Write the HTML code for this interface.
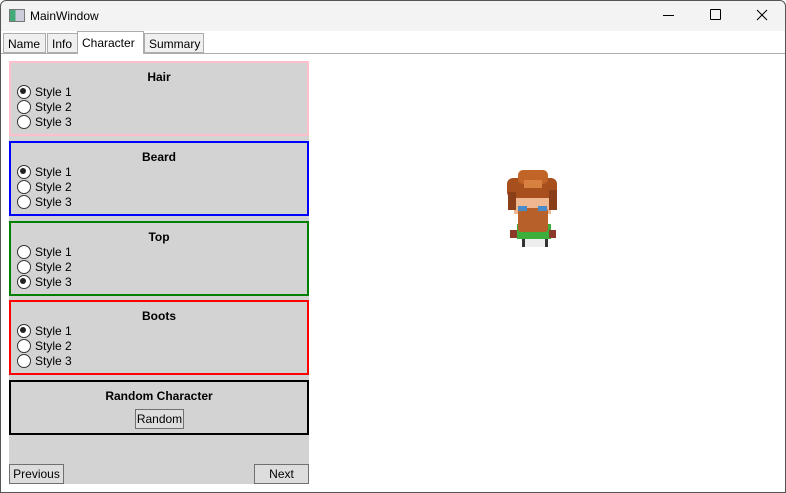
<!DOCTYPE html>
<html><head><meta charset="utf-8"><style>
*{box-sizing:border-box;margin:0;padding:0}
body{width:786px;height:493px;overflow:hidden;background:#fff;font-family:"Liberation Sans",sans-serif;font-size:12px;color:#000;position:relative}
.frame{position:absolute;left:0;top:0;width:786px;height:493px;border:1px solid #555;border-radius:6px 6px 0 0;pointer-events:none}
.title{position:absolute;left:0;top:0;width:786px;height:31px;background:#f3f3f3;border-radius:6px 6px 0 0}
.title .t{position:absolute;left:30px;top:9px;font-size:12px}
.icon{position:absolute;left:9px;top:9px;width:16px;height:13px;border:1px solid #777;background:linear-gradient(90deg,#4a7 0 40%,#ccd 40%)}
.tab{position:absolute;top:33px;height:20px;border:1px solid #acacac;background:#f0f0f0;font-size:12px;padding:3px 4px 0}
.tabline{position:absolute;left:0;top:53px;width:786px;height:1px;background:#acacac}
.panel{position:absolute;left:9px;top:61px;width:300px;height:423px;background:#d3d3d3}
.g{position:absolute;left:9px;width:300px;border:2px solid;background:#d3d3d3}
.g h{display:block;text-align:center;font-weight:bold;margin-top:7px;height:15px}
.r{position:relative;height:15px;padding-left:24px;line-height:14px}
.r:before{content:"";position:absolute;left:6px;top:0px;width:12px;height:12px;border:1px solid #333;border-radius:50%;background:#fff}
.r.on:after{content:"";position:absolute;left:9px;top:3px;width:6px;height:6px;border-radius:50%;background:#222}
.btn{position:absolute;border:1px solid #707070;background:#ddd;text-align:center;line-height:18px;height:20px}
.p{position:absolute}
</style></head><body>
<div class="title"><div class="icon"></div><div class="t">MainWindow</div>
<div class="p" style="left:663px;top:15px;width:11px;height:1px;background:#000"></div>
<div class="p" style="left:710px;top:9px;width:11px;height:11px;border:1px solid #000;border-radius:1px"></div>
<svg class="p" style="left:756px;top:9px" width="12" height="12"><path d="M1 1L11 11M11 1L1 11" stroke="#000" stroke-width="1.1"/></svg>
</div>
<div class="tab" style="left:3px;width:43px">Name</div>
<div class="tab" style="left:47px;width:31px">Info</div>
<div class="tabline"></div>
<div class="tab" style="left:77px;top:31px;height:23px;width:67px;background:#fff;border-bottom:none;padding-top:4px">Character</div>
<div class="tab" style="left:144px;width:60px">Summary</div>
<div class="panel"></div>
<div class="g" style="top:61px;height:75px;border-color:#ffc0cb"><h>Hair</h><div class="r on">Style 1</div><div class="r">Style 2</div><div class="r">Style 3</div></div>
<div class="g" style="top:141px;height:75px;border-color:#0000ff"><h>Beard</h><div class="r on">Style 1</div><div class="r">Style 2</div><div class="r">Style 3</div></div>
<div class="g" style="top:221px;height:75px;border-color:#008000"><h>Top</h><div class="r">Style 1</div><div class="r">Style 2</div><div class="r on">Style 3</div></div>
<div class="g" style="top:300px;height:75px;border-color:#ff0000"><h>Boots</h><div class="r on">Style 1</div><div class="r">Style 2</div><div class="r">Style 3</div></div>
<div class="g" style="top:380px;height:55px;border-color:#000"><h>Random Character</h>
<div class="btn" style="left:124px;top:27px;width:49px;height:20px">Random</div></div>
<div class="btn" style="left:9px;top:464px;width:55px">Previous</div>
<div class="btn" style="left:254px;top:464px;width:55px">Next</div>
<!-- sprite -->
<div class="p" style="left:522px;top:238px;width:26px;height:9px;background:#eee;border-left:3px solid #333;border-right:3px solid #333"></div>
<div class="p" style="left:517px;top:224px;width:34px;height:15px;background:#3cae3c"></div>
<div class="p" style="left:510px;top:230px;width:7px;height:8px;background:#8b3a2a"></div>
<div class="p" style="left:549px;top:230px;width:7px;height:8px;background:#8b3a2a"></div>
<div class="p" style="left:514px;top:196px;width:37px;height:18px;background:#f0b890"></div>
<div class="p" style="left:518px;top:208px;width:30px;height:24px;background:#b8602a;border-radius:3px"></div>
<div class="p" style="left:518px;top:206px;width:9px;height:5px;background:#4a8ac8"></div>
<div class="p" style="left:538px;top:206px;width:9px;height:5px;background:#4a8ac8"></div>
<div class="p" style="left:507px;top:178px;width:50px;height:20px;background:#a84f1e;border-radius:6px"></div>
<div class="p" style="left:518px;top:170px;width:30px;height:14px;background:#c06428;border-radius:5px"></div>
<div class="p" style="left:508px;top:192px;width:8px;height:18px;background:#8a3f18"></div>
<div class="p" style="left:549px;top:190px;width:8px;height:20px;background:#8a3f18"></div>
<div class="p" style="left:524px;top:180px;width:18px;height:8px;background:#d88040"></div>
<div class="frame"></div>
</body></html>
